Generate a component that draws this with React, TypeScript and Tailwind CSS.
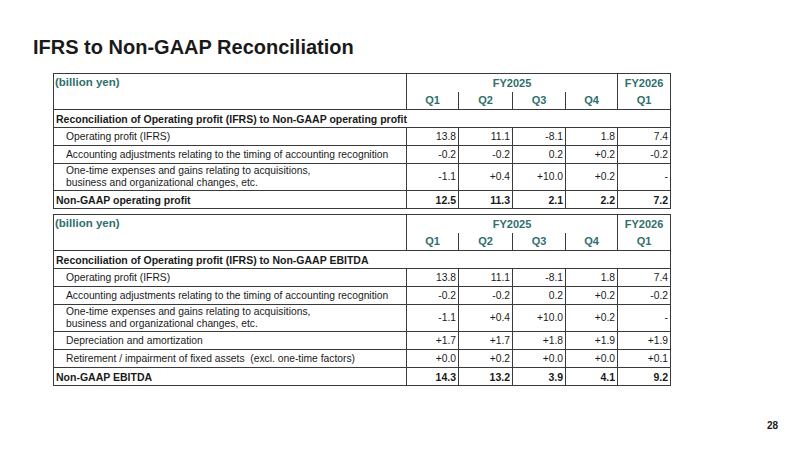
import React from "react";

type Row = {
  label: string;
  values: string[];
  total?: boolean;
  twoLine?: boolean;
};

const opRows: Row[] = [
  { label: "Operating profit (IFRS)", values: ["13.8", "11.1", "-8.1", "1.8", "7.4"] },
  {
    label: "Accounting adjustments relating to the timing of accounting recognition",
    values: ["-0.2", "-0.2", "0.2", "+0.2", "-0.2"],
  },
  {
    label: "One-time expenses and gains relating to acquisitions,\nbusiness and organizational changes, etc.",
    values: ["-1.1", "+0.4", "+10.0", "+0.2", "-"],
    twoLine: true,
  },
  { label: "Non-GAAP operating profit", values: ["12.5", "11.3", "2.1", "2.2", "7.2"], total: true },
];

const ebitdaRows: Row[] = [
  { label: "Operating profit (IFRS)", values: ["13.8", "11.1", "-8.1", "1.8", "7.4"] },
  {
    label: "Accounting adjustments relating to the timing of accounting recognition",
    values: ["-0.2", "-0.2", "0.2", "+0.2", "-0.2"],
  },
  {
    label: "One-time expenses and gains relating to acquisitions,\nbusiness and organizational changes, etc.",
    values: ["-1.1", "+0.4", "+10.0", "+0.2", "-"],
    twoLine: true,
  },
  { label: "Depreciation and amortization", values: ["+1.7", "+1.7", "+1.8", "+1.9", "+1.9"] },
  {
    label: "Retirement / impairment of fixed assets  (excl. one-time factors)",
    values: ["+0.0", "+0.2", "+0.0", "+0.0", "+0.1"],
  },
  { label: "Non-GAAP EBITDA", values: ["14.3", "13.2", "3.9", "4.1", "9.2"], total: true },
];

// one reconciliation table
const ReconTable = ({ section, rows }: { section: string; rows: Row[] }) => {
  return (
    <table className="table-fixed border-collapse w-[617px] text-[10.3px] leading-[12px] text-[#1a1a1a]">
      <colgroup>
        <col className="w-[353px]" />
        <col className="w-[52px]" />
        <col className="w-[54px]" />
        <col className="w-[53px]" />
        <col className="w-[52px]" />
        <col className="w-[53px]" />
      </colgroup>
      <thead>
        <tr className="h-[18px]">
          <td
            rowSpan={2}
            className="border border-[#3a3a3a] align-top pl-[1px] pt-[2px] text-[11.5px] font-bold text-[#2f6f6d]"
          >
            (billion yen)
          </td>
          <td colSpan={4} className="border-t border-[#3a3a3a] text-center text-[11px] font-bold text-[#2f6f6d]">
            FY2025
          </td>
          <td className="border-t border-l border-r border-[#3a3a3a] text-center text-[11px] font-bold text-[#2f6f6d]">
            FY2026
          </td>
        </tr>
        <tr className="h-[18px]">
          {["Q1", "Q2", "Q3", "Q4"].map((q, i) => (
            <td
              key={q}
              className={
                "border-b border-[#3a3a3a] text-center text-[11px] font-bold text-[#2f6f6d] " +
                (i > 0 ? "border-l" : "")
              }
            >
              {q}
            </td>
          ))}
          <td className="border-b border-l border-r border-[#3a3a3a] text-center text-[11px] font-bold text-[#2f6f6d]">
            Q1
          </td>
        </tr>
      </thead>
      <tbody>
        <tr className="h-[18px]">
          <td colSpan={6} className="border border-[#3a3a3a] pl-[2px] text-[10.5px] font-bold whitespace-nowrap">
            {section}
          </td>
        </tr>
        {rows.map((row) => (
          <tr key={row.label} className={row.twoLine ? "h-[27px]" : "h-[18px]"}>
            <td
              className={
                "border border-[#3a3a3a] whitespace-pre " +
                (row.total ? "pl-[2px] text-[10.5px] font-bold" : "pl-[12px]")
              }
            >
              {row.label}
            </td>
            {row.values.map((v, i) => (
              <td
                key={i}
                className={
                  "border border-[#3a3a3a] text-right pr-[2px] " +
                  (row.total ? "text-[10.5px] font-bold" : "")
                }
              >
                {v}
              </td>
            ))}
          </tr>
        ))}
      </tbody>
    </table>
  );
};

export default function App() {
  return (
    <div className="w-[800px] h-[450px] bg-white relative font-['Liberation_Sans',Arial,sans-serif] text-[#1a1a1a]">
      <div className="pl-[33px] pt-[36px]">
        <h1 className="text-[20px] leading-[22px] font-bold">IFRS to Non-GAAP Reconciliation</h1>
      </div>
      <div className="pl-[53px] pt-[15px] flex flex-col gap-[5px]">
        <ReconTable
          section="Reconciliation of Operating profit (IFRS) to Non-GAAP operating profit"
          rows={opRows}
        />
        <ReconTable section="Reconciliation of Operating profit (IFRS) to Non-GAAP EBITDA" rows={ebitdaRows} />
      </div>
      <div className="absolute right-[22px] bottom-[17px] text-[10px] font-bold">28</div>
    </div>
  );
}
